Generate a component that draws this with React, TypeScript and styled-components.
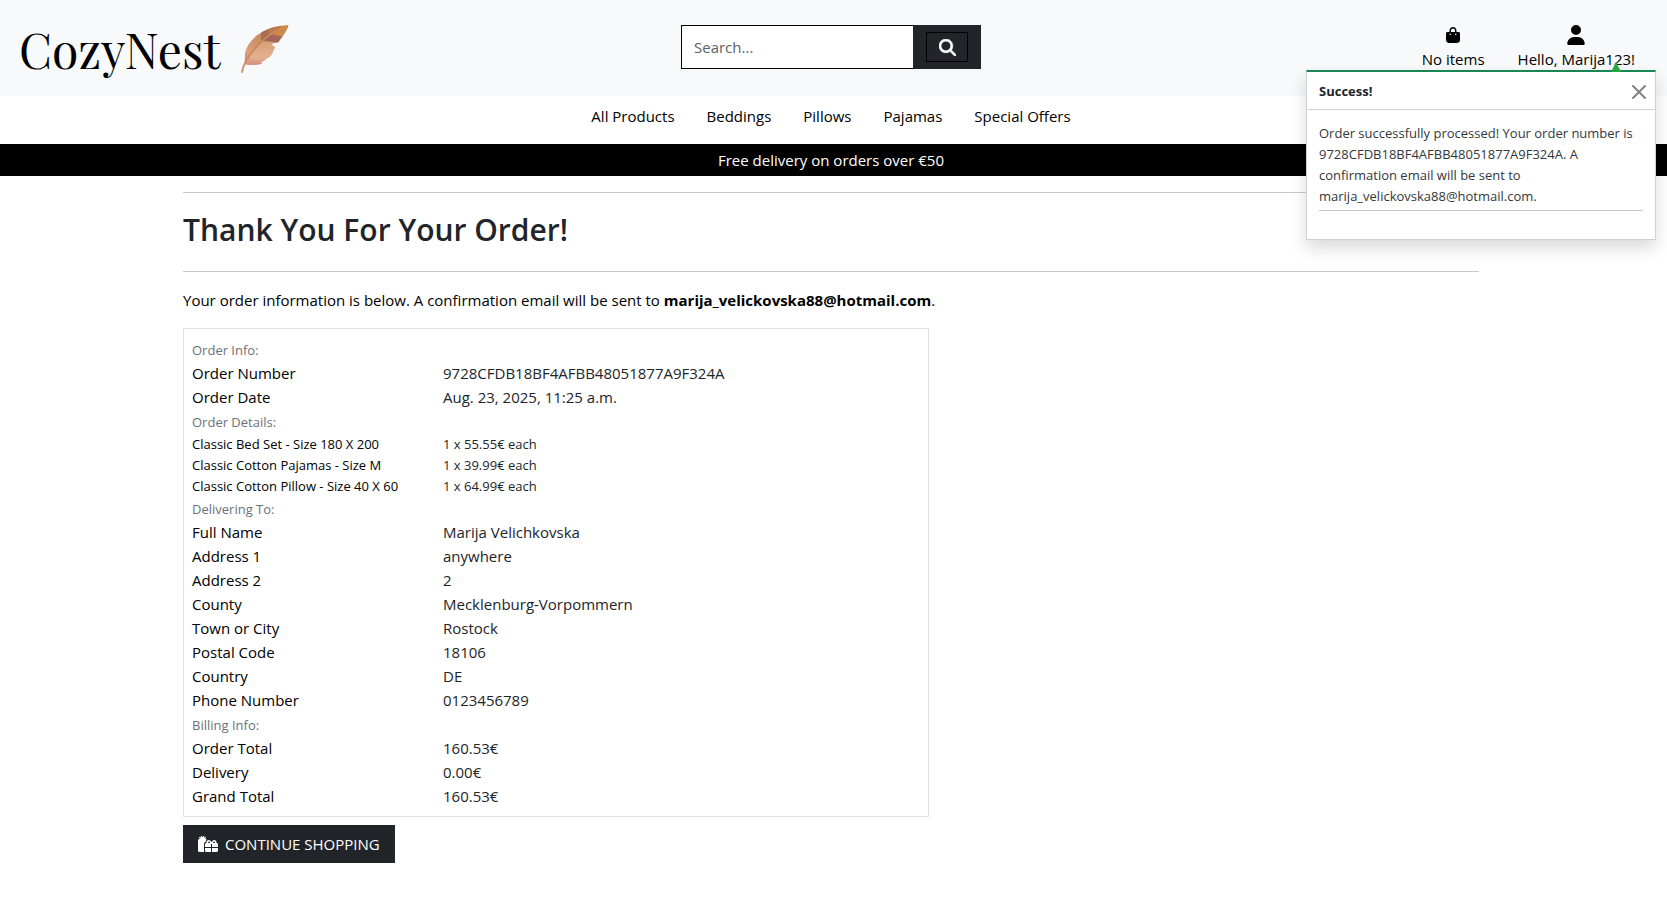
import React, { useState } from "react";
import styled, { createGlobalStyle } from "styled-components";
import { FaBagShopping, FaGifts, FaMagnifyingGlass, FaUser } from "react-icons/fa6";

const GlobalStyle = createGlobalStyle`
  *, *::before, *::after { box-sizing: border-box; }
  body {
    margin: 0;
    background: #fff;
    color: #000;
    font-family: "Segoe UI", "Open Sans", "Noto Sans", sans-serif;
    font-size: 15px;
    line-height: 24px;
  }
  a { color: inherit; text-decoration: none; }
`;

const Header = styled.header`
  display: grid;
  grid-template-columns: 1fr 300px 1fr;
  align-items: center;
  min-height: 96px;
  padding: 0 24px 2px 19px;
  background: #f8f9fb;
`;

const Brand = styled.a`
  display: flex;
  align-items: center;
  gap: 21px;
  padding-top: 4px;
  font-family: "Playfair Display", "Liberation Serif", serif;
  font-size: 48px;
  line-height: 54px;
`;

const SearchForm = styled.form`
  display: flex;
  height: 44px;
`;

const SearchInput = styled.input`
  flex: 1;
  min-width: 0;
  padding: 0 12px;
  border: 1px solid #000;
  border-right: 0;
  border-radius: 0;
  background: #fff;
  font: inherit;
  outline: none;
  &::placeholder { color: #5c6166; opacity: 1; }
`;

const SearchButton = styled.button`
  display: flex;
  align-items: center;
  justify-content: center;
  width: 68px;
  padding: 0;
  border: 0;
  background: #212529;
  color: #fff;
  font-size: 17px;
`;

const SearchIconBox = styled.span`
  display: flex;
  align-items: center;
  justify-content: center;
  width: 42px;
  height: 30px;
  border: 1px solid #000;
  svg { stroke: currentColor; stroke-width: 16px; }
`;

const Account = styled.nav`
  display: flex;
  justify-content: flex-end;
  gap: 33px;
  padding-right: 8px;
`;

const AccountLink = styled.a`
  display: flex;
  flex-direction: column;
  align-items: center;
`;

const AccountIcon = styled.span<{ $size: number }>`
  display: flex;
  align-items: center;
  height: 24px;
  font-size: ${(p) => p.$size}px;
`;

const MainNav = styled.nav`
  display: flex;
  flex-wrap: wrap;
  justify-content: center;
  gap: 32px;
  padding: 8px 5px 16px 0;
`;

const Banner = styled.div`
  padding: 4px 5px 4px 0;
  background: #000;
  color: #fff;
  text-align: center;
`;

const Main = styled.main`
  padding: 0 17px 32px 12px;
`;

const Container = styled.div`
  max-width: 1296px;
  margin: 0 auto;
`;

const Rule = styled.hr`
  margin: 16px 0;
  border: 0;
  border-top: 1px solid #c8c9ca;
`;

const Title = styled.h1`
  margin: 0 0 20px;
  color: #212529;
  font-size: 30px;
  font-weight: 600;
  line-height: 42px;
`;

const Intro = styled.p`
  margin: 0 0 16px;
`;

const OrderCard = styled.section`
  max-width: 746px;
  margin-bottom: 8px;
  padding: 8px;
  border: 1px solid #dee2e6;
`;

const GroupTitle = styled.h2`
  margin: 0;
  padding-top: 2px;
  color: #6c7176;
  font-size: 13px;
  font-weight: 400;
  line-height: 22px;
`;

const Details = styled.dl<{ $small?: boolean }>`
  display: grid;
  grid-template-columns: 251px 1fr;
  grid-auto-rows: ${(p) => (p.$small ? 21 : 24)}px;
  margin: 0;
  font-size: ${(p) => (p.$small ? 13 : 15)}px;
  line-height: ${(p) => (p.$small ? 22 : 24)}px;
`;

const Term = styled.dt``;

const Value = styled.dd`
  margin: 0;
  color: #212529;
`;

const ContinueLink = styled.a`
  display: inline-flex;
  align-items: center;
  gap: 6px;
  height: 38px;
  padding: 0 15px 0 14px;
  background: #212529;
  color: #fff;
  text-transform: uppercase;
  svg { height: 16px; width: 22px; }
`;

const Toast = styled.aside`
  position: absolute;
  top: 70px;
  right: 11px;
  width: 350px;
  border: 1px solid #cfd0d1;
  border-top: 2px solid #198754;
  background: #fff;
  color: #212529;
  box-shadow: 0 8px 16px rgba(0, 0, 0, 0.15);
  font-size: 13px;
  line-height: 21px;
  &::before {
    content: "";
    position: absolute;
    right: 34px;
    bottom: 100%;
    border: 5px solid transparent;
    border-top: 0;
    border-bottom: 10px solid #28a745;
  }
`;

const ToastHeader = styled.div`
  display: flex;
  align-items: center;
  justify-content: space-between;
  padding: 9px 8px 7px 12px;
  border-bottom: 1px solid #cfd0d1;
`;

const CloseButton = styled.button`
  display: flex;
  padding: 0;
  border: 0;
  background: none;
  color: #808284;
`;

const ToastBody = styled.div`
  padding: 13px 12px 28px;
  p { margin: 0; color: #33373b; }
  hr { margin: 3px 0 0; }
`;

function Feather() {
  return (
    <svg width="48" height="48" viewBox="33 33 144 144" aria-hidden="true">
      <defs>
        <linearGradient id="vane" x1="0.9" y1="0" x2="0.4" y2="1">
          <stop offset="0" stopColor="#cd8748" />
          <stop offset="0.45" stopColor="#cc9066" />
          <stop offset="0.75" stopColor="#dba078" />
          <stop offset="1" stopColor="#d58c7d" />
        </linearGradient>
        <linearGradient id="lobe" x1="0" y1="0" x2="0" y2="1">
          <stop offset="0" stopColor="#d7a077" />
          <stop offset="0.6" stopColor="#e5b193" />
          <stop offset="1" stopColor="#cf837b" />
        </linearGradient>
        <clipPath id="featherShape">
          <path d="M176 34C145 33 109 44 81 64C55 84 43 108 44 134L43 150C60 154 78 153 96 149L93 145L107 137L104 136C119 132 127 121 129 112C135 101 136 97 128 95L123 89L145 85C154 72 171 51 176 34Z" />
        </clipPath>
      </defs>
      <g clipPath="url(#featherShape)">
        <path fill="url(#vane)" d="M33 33h144v144H33z" />
        <path fill="url(#lobe)" d="M44 151L68 114L96 84L150 85L120 145L90 160Z" />
        <path fill="#a86d5b" d="M93 51L116 40L116 61L93 79Z" />
        <path fill="#bb7751" d="M116 38L153 37L151 57L116 60Z" />
        <path fill="#a3665b" d="M94 79L113 59L160 66L145 86Z" />
        <path fill="#cf8949" d="M131 61L152 43L177 33L157 68Z" />
      </g>
      <path d="M36 174C40 150 61 118 85 92C107 69 128 55 153 43" fill="none" stroke="#b97546" strokeWidth="5" />
      <path d="M36 174C40 150 61 118 85 92C107 69 128 55 153 43" fill="none" stroke="#dda063" strokeWidth="3" />
      <path d="M34 177L37 160L42 158L38 177Z" fill="#d39970" />
    </svg>
  );
}

type Entry = [string, string];
const groups: { title: string; small?: boolean; entries: Entry[] }[] = [
  {
    title: "Order Info:",
    entries: [
      ["Order Number", "9728CFDB18BF4AFBB48051877A9F324A"],
      ["Order Date", "Aug. 23, 2025, 11:25 a.m."],
    ],
  },
  {
    title: "Order Details:",
    small: true,
    entries: [
      ["Classic Bed Set - Size 180 X 200", "1 x 55.55€ each"],
      ["Classic Cotton Pajamas - Size M", "1 x 39.99€ each"],
      ["Classic Cotton Pillow - Size 40 X 60", "1 x 64.99€ each"],
    ],
  },
  {
    title: "Delivering To:",
    entries: [
      ["Full Name", "Marija Velichkovska"],
      ["Address 1", "anywhere"],
      ["Address 2", "2"],
      ["County", "Mecklenburg-Vorpommern"],
      ["Town or City", "Rostock"],
      ["Postal Code", "18106"],
      ["Country", "DE"],
      ["Phone Number", "0123456789"],
    ],
  },
  {
    title: "Billing Info:",
    entries: [
      ["Order Total", "160.53€"],
      ["Delivery", "0.00€"],
      ["Grand Total", "160.53€"],
    ],
  },
];

const links = ["All Products", "Beddings", "Pillows", "Pajamas", "Special Offers"];

export default function App() {
  const [toastOpen, setToastOpen] = useState(true);
  return (
    <>
      <GlobalStyle />
      <Header>
        <Brand href="#">
          CozyNest
          <Feather />
        </Brand>
        <SearchForm role="search" onSubmit={(e) => e.preventDefault()}>
          <SearchInput type="text" placeholder="Search..." aria-label="Search" />
          <SearchButton type="submit" aria-label="Submit search">
            <SearchIconBox>
              <FaMagnifyingGlass />
            </SearchIconBox>
          </SearchButton>
        </SearchForm>
        <Account aria-label="Account">
          <AccountLink href="#">
            <AccountIcon $size={16}><FaBagShopping /></AccountIcon>
            No items
          </AccountLink>
          <AccountLink href="#">
            <AccountIcon $size={20}><FaUser /></AccountIcon>
            Hello, Marija123!
          </AccountLink>
        </Account>
      </Header>
      <MainNav aria-label="Shop">
        {links.map((label) => (
          <a key={label} href="#">{label}</a>
        ))}
      </MainNav>
      <Banner>Free delivery on orders over €50</Banner>
      <Main>
        <Container>
          <Rule />
          <Title>Thank You For Your Order!</Title>
          <Rule />
          <Intro>
            Your order information is below. A confirmation email will be sent to{" "}
            <strong>marija_velickovska88@hotmail.com</strong>.
          </Intro>
          <OrderCard>
            {groups.map((group) => (
              <React.Fragment key={group.title}>
                <GroupTitle>{group.title}</GroupTitle>
                <Details $small={group.small}>
                  {group.entries.map(([term, value]) => (
                    <React.Fragment key={term}>
                      <Term>{term}</Term>
                      <Value>{value}</Value>
                    </React.Fragment>
                  ))}
                </Details>
              </React.Fragment>
            ))}
          </OrderCard>
          <ContinueLink href="#">
            <FaGifts />
            Continue Shopping
          </ContinueLink>
        </Container>
      </Main>
      {toastOpen && (
        <Toast role="status">
          <ToastHeader>
            <strong>Success!</strong>
            <CloseButton type="button" aria-label="Close" onClick={() => setToastOpen(false)}>
              <svg width="16" height="16" viewBox="0 0 16 16" fill="none" stroke="currentColor" strokeWidth="2" strokeLinecap="round">
                <path d="M2 2L14 14M14 2L2 14" />
              </svg>
            </CloseButton>
          </ToastHeader>
          <ToastBody>
            <p>
              Order successfully processed! Your order number is 9728CFDB18BF4AFBB48051877A9F324A. A
              confirmation email will be sent to marija_velickovska88@hotmail.com.
            </p>
            <Rule />
          </ToastBody>
        </Toast>
      )}
    </>
  );
}
